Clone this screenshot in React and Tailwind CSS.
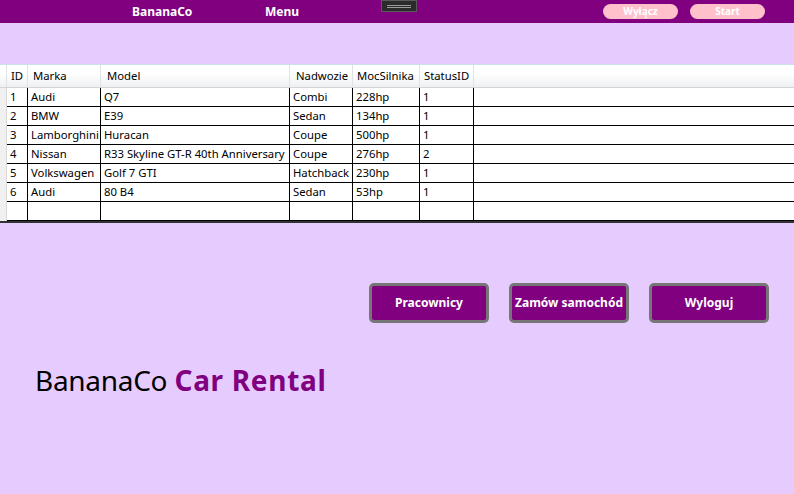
import React from 'react'

const cars = [
  { id: 1, marka: 'Audi', model: 'Q7', nadwozie: 'Combi', moc: '228hp', status: 1 },
  { id: 2, marka: 'BMW', model: 'E39', nadwozie: 'Sedan', moc: '134hp', status: 1 },
  { id: 3, marka: 'Lamborghini', model: 'Huracan', nadwozie: 'Coupe', moc: '500hp', status: 1 },
  { id: 4, marka: 'Nissan', model: 'R33 Skyline GT-R 40th Anniversary', nadwozie: 'Coupe', moc: '276hp', status: 2 },
  { id: 5, marka: 'Volkswagen', model: 'Golf 7 GTI', nadwozie: 'Hatchback', moc: '230hp', status: 1 },
  { id: 6, marka: 'Audi', model: '80 B4', nadwozie: 'Sedan', moc: '53hp', status: 1 },
]

const font = { fontFamily: '"Noto Sans", "Open Sans", sans-serif' }

function HeaderCell({ w, children }) {
  return (
    <div className={`${w} shrink-0 h-full border-r border-[#dfe3e8] pl-[4px] flex items-center whitespace-nowrap`}>
      {children}
    </div>
  )
}

function Cell({ w, children }) {
  return (
    <div className={`${w} shrink-0 h-full border-r border-black pl-[3px] flex items-center whitespace-nowrap overflow-hidden`}>
      {children}
    </div>
  )
}

function Row({ car }) {
  return (
    <div className="flex h-[19px] text-[11.3px] text-black">
      <div className="w-[7px] shrink-0 h-full bg-[#f0f0f0] border-r border-[#d8d8d8]" />
      <div className="flex flex-1 h-full border-b border-black bg-white">
        <Cell w="w-[21px]">{car ? car.id : ''}</Cell>
        <Cell w="w-[73px]">{car ? car.marka : ''}</Cell>
        <Cell w="w-[189px]">{car ? car.model : ''}</Cell>
        <Cell w="w-[63px]">{car ? car.nadwozie : ''}</Cell>
        <Cell w="w-[67px]">{car ? car.moc : ''}</Cell>
        <Cell w="w-[54px]">{car ? car.status : ''}</Cell>
        <div className="flex-1" />
      </div>
    </div>
  )
}

function PurpleButton({ children }) {
  return (
    <button className="w-[120px] h-[40px] rounded-[5px] border-[3px] border-[#767676] bg-[#800080] text-white text-[12px] font-bold">
      {children}
    </button>
  )
}

export default function App() {
  return (
    <div className="w-[794px] h-[494px] bg-[#e6ccfe] overflow-hidden flex flex-col" style={font}>
      {/* Top bar */}
      <div className="h-[23px] bg-[#800080] flex items-start relative">
        <span className="absolute left-[132px] top-[3px] text-white text-[12px] font-bold">BananaCo</span>
        <span className="absolute left-[265px] top-[3px] text-white text-[12px] font-bold">Menu</span>
        <div className="absolute left-[381px] top-0 w-[36px] h-[12px] bg-[#2b2b2b] border border-[#5a5a5a] flex flex-col items-center justify-center gap-[1px]">
          <div className="w-[24px] h-px bg-[#9a9a9a]" />
          <div className="w-[24px] h-px bg-[#9a9a9a]" />
        </div>
        <button className="absolute left-[603px] top-[4px] w-[75px] h-[15px] rounded-full bg-[#ffc0cb] text-white text-[10px] font-bold leading-[15px]">Wyłącz</button>
        <button className="absolute left-[690px] top-[4px] w-[75px] h-[15px] rounded-full bg-[#ffc0cb] text-white text-[10px] font-bold leading-[15px]">Start</button>
      </div>

      {/* Table */}
      <div className="mt-[41px] bg-white border-t border-[#c9e2ea] border-b-2 border-b-[#333]">
        <div className="flex h-[23px] text-[11.3px] text-black bg-gradient-to-b from-white from-40% to-[#eef0f2] border-b border-[#d5d5d5]">
          <div className="w-[7px] shrink-0 h-full border-r border-[#dfe3e8]" />
          <HeaderCell w="w-[21px]">ID</HeaderCell>
          <HeaderCell w="w-[73px]"><span className="pl-[1px]">Marka</span></HeaderCell>
          <HeaderCell w="w-[189px]"><span className="pl-[2px]">Model</span></HeaderCell>
          <HeaderCell w="w-[63px]"><span className="pl-[2px]">Nadwozie</span></HeaderCell>
          <HeaderCell w="w-[67px]">MocSilnika</HeaderCell>
          <HeaderCell w="w-[54px]">StatusID</HeaderCell>
          <div className="flex-1" />
        </div>
        {cars.map((c) => (
          <Row key={c.id} car={c} />
        ))}
        <Row car={null} />
      </div>

      {/* Buttons */}
      <div className="mt-[60px] flex justify-end gap-[20px] pr-[25px]">
        <PurpleButton>Pracownicy</PurpleButton>
        <PurpleButton>Zamów samochód</PurpleButton>
        <PurpleButton>Wyloguj</PurpleButton>
      </div>

      {/* Title */}
      <h1 className="mt-[40px] ml-[35px] text-[28px] text-black leading-[34px]">
        <span className="tracking-[-0.3px]">BananaCo</span>{' '}
        <span className="font-bold text-[#800080] tracking-[0.7px]">Car Rental</span>
      </h1>
    </div>
  )
}
